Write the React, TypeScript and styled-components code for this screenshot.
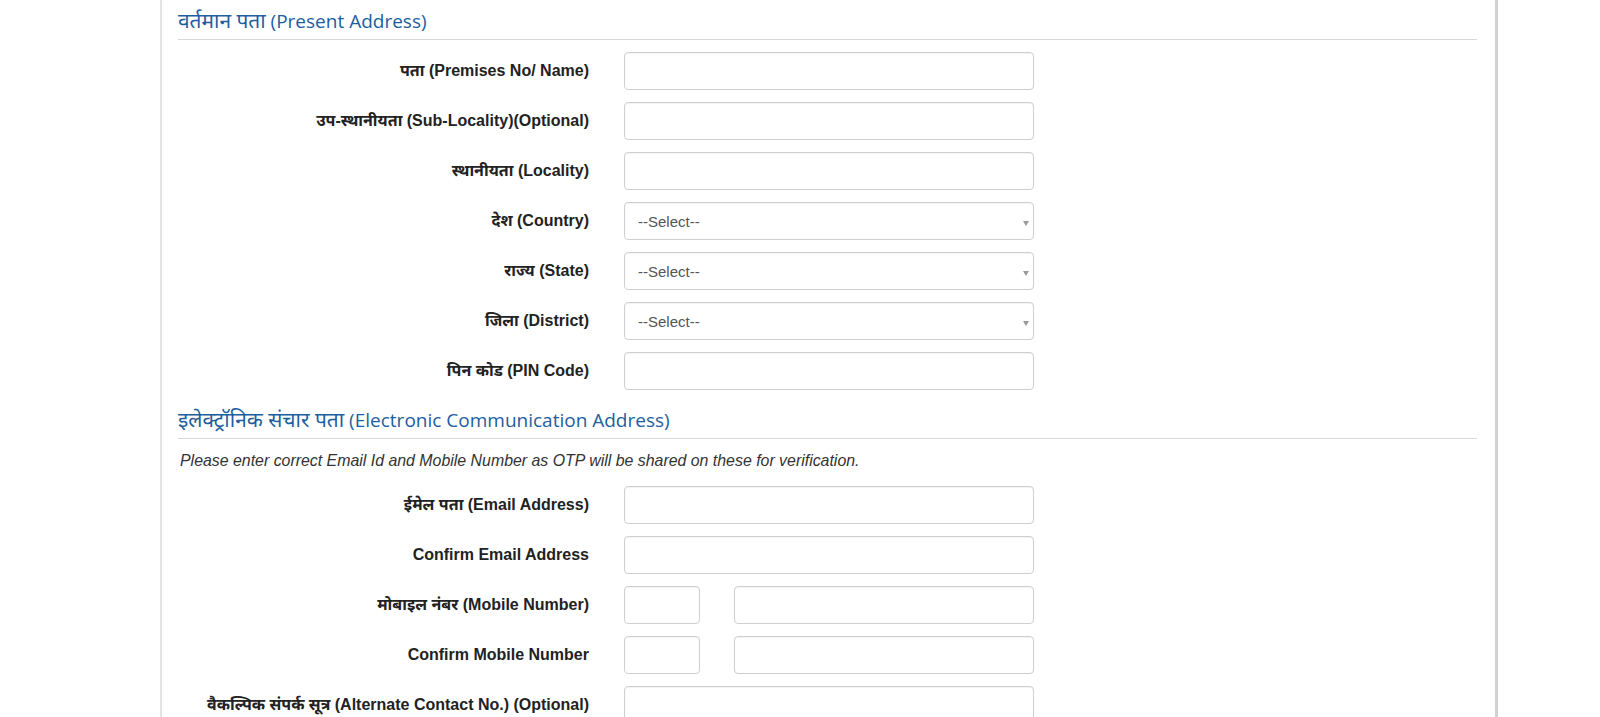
import React from "react";
import styled, { createGlobalStyle } from "styled-components";

const GlobalStyle = createGlobalStyle`
  html, body { margin: 0; padding: 0; background: #ffffff; }
  body { font-family: "Liberation Sans", Arial, "Noto Sans Devanagari", "Lohit Devanagari", sans-serif; }
  * { box-sizing: border-box; }
`;

const Page = styled.div`
  width: 1600px;
  height: 717px;
  overflow: hidden;
  background: #ffffff;
  display: flex;
  justify-content: flex-start;
`;

const Panel = styled.div`
  margin-left: 160px;
  width: 1338px;
  min-height: 717px;
  background: #ffffff;
  border-left: 2px solid #e4e4e4;
  border-right: 3px solid #d2d2d2;
  padding: 9px 18px 0 16px;
`;

const SectionTitle = styled.h3<{ $first?: boolean }>`
  margin: ${(p) => (p.$first ? "0" : "18px")} 0 0 0;
  height: 31px;
  padding: 0 0 6px 0;
  font-family: "Open Sans", "Noto Sans Devanagari", "Lohit Devanagari", sans-serif;
  font-size: 19px;
  line-height: 24px;
  font-weight: 400;
  color: #1d5e9e;
  border-bottom: 1px solid #d9d9d9;
  white-space: nowrap;
  overflow: visible;
`;

const Hindi = styled.span`
  font-size: 1.1em;
  line-height: 1;
`;

const Note = styled.p`
  margin: 12px 0 0 2px;
  font-family: "Liberation Sans", Arial, sans-serif;
  font-style: italic;
  font-size: 15.9px;
  line-height: 20px;
  color: #333333;
  white-space: nowrap;
`;

const Form = styled.div<{ $top: number }>`
  margin-top: ${(p) => p.$top}px;
  display: grid;
  grid-template-columns: 411px 410px;
  column-gap: 35px;
  row-gap: 12px;
  align-items: center;
`;

const Label = styled.label`
  text-align: right;
  font-family: "Liberation Sans", Arial, "Noto Sans Devanagari", "Lohit Devanagari", sans-serif;
  font-weight: 700;
  font-size: 16px;
  line-height: 20px;
  color: #222222;
  white-space: nowrap;
`;

const TextInput = styled.input<{ $w?: number }>`
  width: ${(p) => (p.$w ? `${p.$w}px` : "100%")};
  height: 38px;
  border: 1px solid #cfcfcf;
  border-radius: 4px;
  background: #ffffff;
  box-shadow: inset 0 1px 1px rgba(0, 0, 0, 0.05);
  padding: 6px 12px;
  font-family: "Liberation Sans", Arial, sans-serif;
  font-size: 14px;
  outline: none;
`;

const SelectBox = styled.div`
  position: relative;
  width: 100%;
  height: 38px;
  border: 1px solid #cfcfcf;
  border-radius: 4px;
  background: #ffffff;
  box-shadow: inset 0 1px 1px rgba(0, 0, 0, 0.05);
  display: flex;
  align-items: center;
  padding: 0 13px;
  font-family: "Liberation Sans", Arial, sans-serif;
  font-size: 15px;
  color: #555555;
`;

const Caret = styled.span`
  position: absolute;
  right: 4px;
  top: 18px;
  width: 0;
  height: 0;
  border-left: 3px solid transparent;
  border-right: 3px solid transparent;
  border-top: 5px solid #9a9a9a;
`;

const Pair = styled.div`
  display: flex;
  gap: 34px;
`;

const Select = () => (
  <SelectBox>
    --Select--
    <Caret />
  </SelectBox>
);

export default function App() {
  return (
    <>
      <GlobalStyle />
      <Page>
        <Panel>
          <SectionTitle $first>
            <Hindi>वर्तमान पता</Hindi> (Present Address)
          </SectionTitle>
          <Form $top={12}>
            <Label>पता (Premises No/ Name)</Label>
            <TextInput />
            <Label>उप-स्थानीयता (Sub-Locality)(Optional)</Label>
            <TextInput />
            <Label>स्थानीयता (Locality)</Label>
            <TextInput />
            <Label>देश (Country)</Label>
            <Select />
            <Label>राज्य (State)</Label>
            <Select />
            <Label>जिला (District)</Label>
            <Select />
            <Label>पिन कोड (PIN Code)</Label>
            <TextInput />
          </Form>

          <SectionTitle>
            <Hindi>इलेक्ट्रॉनिक संचार पता</Hindi> (Electronic Communication Address)
          </SectionTitle>
          <Note>
            Please enter correct Email Id and Mobile Number as OTP will be shared on these for verification.
          </Note>
          <Form $top={15}>
            <Label>ईमेल पता (Email Address)</Label>
            <TextInput />
            <Label>Confirm Email Address</Label>
            <TextInput />
            <Label>मोबाइल नंबर (Mobile Number)</Label>
            <Pair>
              <TextInput $w={76} />
              <TextInput $w={300} />
            </Pair>
            <Label>Confirm Mobile Number</Label>
            <Pair>
              <TextInput $w={76} />
              <TextInput $w={300} />
            </Pair>
            <Label>वैकल्पिक संपर्क सूत्र (Alternate Contact No.) (Optional)</Label>
            <TextInput />
          </Form>
        </Panel>
      </Page>
    </>
  );
}
